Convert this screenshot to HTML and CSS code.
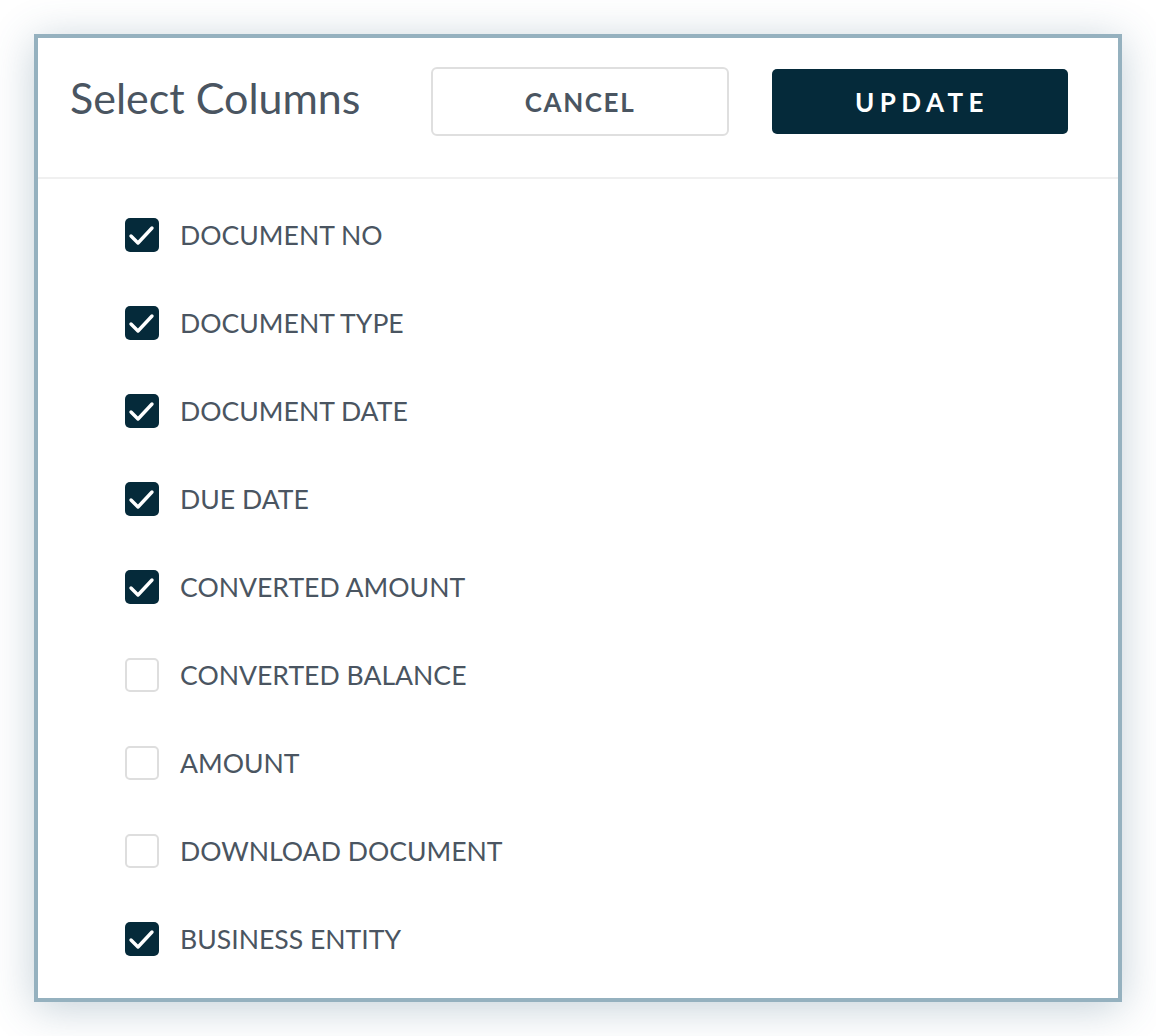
FILE: index.html
```html
<!DOCTYPE html>
<html>
<head>
<meta charset="utf-8">
<link rel="stylesheet" href="styles.css">
</head>
<body>
<div class="panel">
  <div class="header">
    <h1 class="title">Select Columns</h1>
    <button class="btn btn-cancel">CANCEL</button>
    <button class="btn btn-update">UPDATE</button>
  </div>
  <ul class="list">
    <li class="row"><span class="box checked"><svg viewBox="0 0 34 34"><polyline points="6,18 13,25 27,10"/></svg></span><span class="label">DOCUMENT NO</span></li>
    <li class="row"><span class="box checked"><svg viewBox="0 0 34 34"><polyline points="6,18 13,25 27,10"/></svg></span><span class="label">DOCUMENT TYPE</span></li>
    <li class="row"><span class="box checked"><svg viewBox="0 0 34 34"><polyline points="6,18 13,25 27,10"/></svg></span><span class="label">DOCUMENT DATE</span></li>
    <li class="row"><span class="box checked"><svg viewBox="0 0 34 34"><polyline points="6,18 13,25 27,10"/></svg></span><span class="label">DUE DATE</span></li>
    <li class="row"><span class="box checked"><svg viewBox="0 0 34 34"><polyline points="6,18 13,25 27,10"/></svg></span><span class="label">CONVERTED AMOUNT</span></li>
    <li class="row"><span class="box"></span><span class="label">CONVERTED BALANCE</span></li>
    <li class="row"><span class="box"></span><span class="label">AMOUNT</span></li>
    <li class="row"><span class="box"></span><span class="label">DOWNLOAD DOCUMENT</span></li>
    <li class="row"><span class="box checked"><svg viewBox="0 0 34 34"><polyline points="6,18 13,25 27,10"/></svg></span><span class="label">BUSINESS ENTITY</span></li>
  </ul>
</div>
</body>
</html>
```
FILE: styles.css
```css
html, body {
  margin: 0;
  padding: 0;
  background: #ffffff;
}
body {
  font-family: Lato, "Open Sans", sans-serif;
  padding: 34px;
  width: 1088px;
  box-sizing: content-box;
}
.panel {
  width: 1088px;
  height: 968px;
  box-sizing: border-box;
  border: 4px solid #95b1bf;
  background: #fff;
  box-shadow: 0 6px 40px rgba(60, 100, 125, 0.3);
}
.header {
  display: flex;
  align-items: center;
  padding: 29px 50px 41px 32px;
  border-bottom: 2px solid #f0f0f0;
}
.title {
  margin: 0;
  flex: 1;
  font-size: 43px;
  font-weight: 400;
  color: #4a5561;
  line-height: 1;
  margin-top: -8px;
}
.btn {
  font-family: Lato, sans-serif;
  font-weight: 700;
  cursor: pointer;
  box-sizing: border-box;
}
.btn-cancel {
  width: 298px;
  height: 69px;
  border: 2px solid #dfdfdf;
  border-radius: 6px;
  background: #fff;
  color: #4a5561;
  font-size: 26px;
  letter-spacing: 1.6px;
}
.btn-update {
  margin-left: 43px;
  width: 296px;
  height: 65px;
  border: none;
  border-radius: 5px;
  background: #052a3a;
  color: #fff;
  font-size: 26px;
  letter-spacing: 5.4px;
  padding-left: 10px;
}
.list {
  list-style: none;
  margin: 0;
  padding: 12px 0 0 87px;
}
.row {
  height: 88px;
  display: flex;
  align-items: center;
}
.box {
  width: 34px;
  height: 34px;
  box-sizing: border-box;
  border: 2px solid #dedede;
  border-radius: 5px;
  margin-right: 21px;
  display: flex;
}
.box.checked {
  border: none;
  background: #052a3a;
}
.box svg {
  width: 34px;
  height: 34px;
}
.box polyline {
  fill: none;
  stroke: #fff;
  stroke-width: 3.4;
  stroke-linecap: round;
  stroke-linejoin: round;
}
.label {
  font-size: 26.6px;
  color: #4a5561;
  line-height: 1;
}
```
